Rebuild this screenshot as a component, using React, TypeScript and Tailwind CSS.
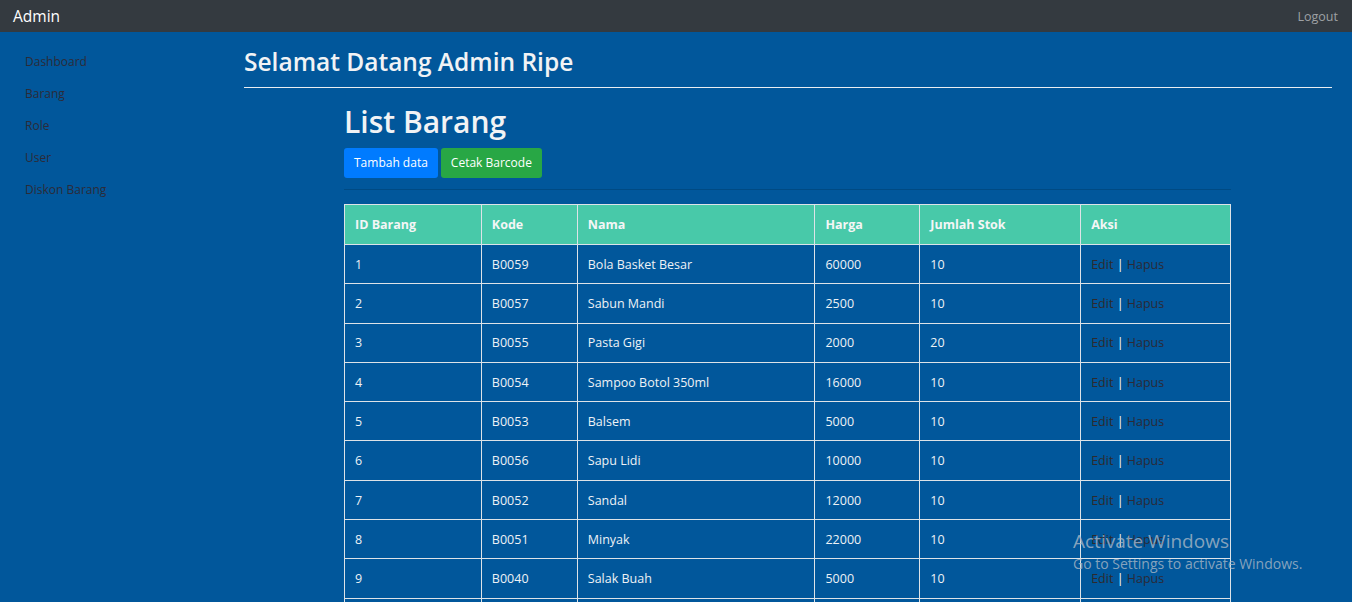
const menu = ["Dashboard", "Barang", "Role", "User", "Diskon Barang"];

const barang = [
  { id: 1, kode: "B0059", nama: "Bola Basket Besar", harga: 60000, stok: 10 },
  { id: 2, kode: "B0057", nama: "Sabun Mandi", harga: 2500, stok: 10 },
  { id: 3, kode: "B0055", nama: "Pasta Gigi", harga: 2000, stok: 20 },
  { id: 4, kode: "B0054", nama: "Sampoo Botol 350ml", harga: 16000, stok: 10 },
  { id: 5, kode: "B0053", nama: "Balsem", harga: 5000, stok: 10 },
  { id: 6, kode: "B0056", nama: "Sapu Lidi", harga: 10000, stok: 10 },
  { id: 7, kode: "B0052", nama: "Sandal", harga: 12000, stok: 10 },
  { id: 8, kode: "B0051", nama: "Minyak", harga: 22000, stok: 10 },
  { id: 9, kode: "B0040", nama: "Salak Buah", harga: 5000, stok: 10 },
  { id: 10, kode: "B0039", nama: "Gula Pasir", harga: 14000, stok: 10 },
];

const headers = ["ID Barang", "Kode", "Nama", "Harga", "Jumlah Stok", "Aksi"];
const colWidths = ["w-[137px]", "w-[96px]", "w-[238px]", "w-[105px]", "w-[161px]", "w-[150px]"];

export default function App() {
  return (
    <div className="relative h-screen overflow-hidden bg-[#01579b] font-['Open_Sans','Noto_Sans',sans-serif] text-[13px] text-[#eef2f6]">
      <nav className="flex h-8 items-center justify-between bg-[#343a40] pr-[14px] pl-[13px]">
        <span className="pt-[2px] text-[15.5px] text-white">Admin</span>
        <a className="pt-[2px] text-[12.5px] text-[#9ea1a5]">Logout</a>
      </nav>

      <div className="flex">
        <aside className="w-[244px] shrink-0 pt-[19px] pl-[25px]">
          <ul className="flex flex-col">
            {menu.map((item) => (
              <li key={item} className="h-8 text-[12px] leading-[22px] text-[#2c2b38]">
                {item}
              </li>
            ))}
          </ul>
        </aside>

        <main className="flex-1 pr-5">
          <h2 className="pt-[14px] pb-[9px] text-[24.5px] leading-8 font-semibold text-[#f1f3f5]">
            Selamat Datang Admin Ripe
          </h2>
          <hr className="border-t border-[#e9edf1]" />

          <div className="ml-[100px] w-[887px]">
            <h1 className="pt-[13px] text-[30px] leading-[42px] font-semibold text-[#f1f3f5]">
              List Barang
            </h1>
            <div className="mt-[5px] flex gap-[3px]">
              <button className="h-[30px] rounded-[3px] bg-[#007bff] px-[10px] text-[12px] text-white">
                Tambah data
              </button>
              <button className="h-[30px] rounded-[3px] bg-[#28a745] px-[10px] text-[12px] text-white">
                Cetak Barcode
              </button>
            </div>
            <hr className="mt-[11px] border-t border-black/15" />

            <table className="mt-[14px] w-[887px] border-collapse text-[12.5px]">
              <thead>
                <tr className="h-10 bg-[#48c9a9]">
                  {headers.map((h, i) => (
                    <th
                      key={h}
                      className={`${colWidths[i]} border border-[#dde3e8] px-[10px] pt-[2px] text-left font-bold text-[#f4f6f6]`}
                    >
                      {h}
                    </th>
                  ))}
                </tr>
              </thead>
              <tbody>
                {barang.map((b) => (
                  <tr key={b.id} className="h-[39.3px]">
                    <td className="border border-[#dde3e8] px-[10px] pt-[2px]">{b.id}</td>
                    <td className="border border-[#dde3e8] px-[10px] pt-[2px]">{b.kode}</td>
                    <td className="border border-[#dde3e8] px-[10px] pt-[2px]">{b.nama}</td>
                    <td className="border border-[#dde3e8] px-[10px] pt-[2px]">{b.harga}</td>
                    <td className="border border-[#dde3e8] px-[10px] pt-[2px]">{b.stok}</td>
                    <td className="border border-[#dde3e8] px-[10px] pt-[2px]">
                      <a className="text-[#2e2a2c]">Edit</a>{" "}
                      <span className="text-white">|</span>{" "}
                      <a className="text-[#2b2a36]">Hapus</a>
                    </td>
                  </tr>
                ))}
              </tbody>
            </table>
          </div>
        </main>
      </div>

      <div className="pointer-events-none absolute top-[528px] left-[1073px] text-[#a9b7c6]/80">
        <p className="text-[19px] leading-[26px]">Activate Windows</p>
        <p className="text-[14px] leading-5">Go to Settings to activate Windows.</p>
      </div>
    </div>
  );
}
